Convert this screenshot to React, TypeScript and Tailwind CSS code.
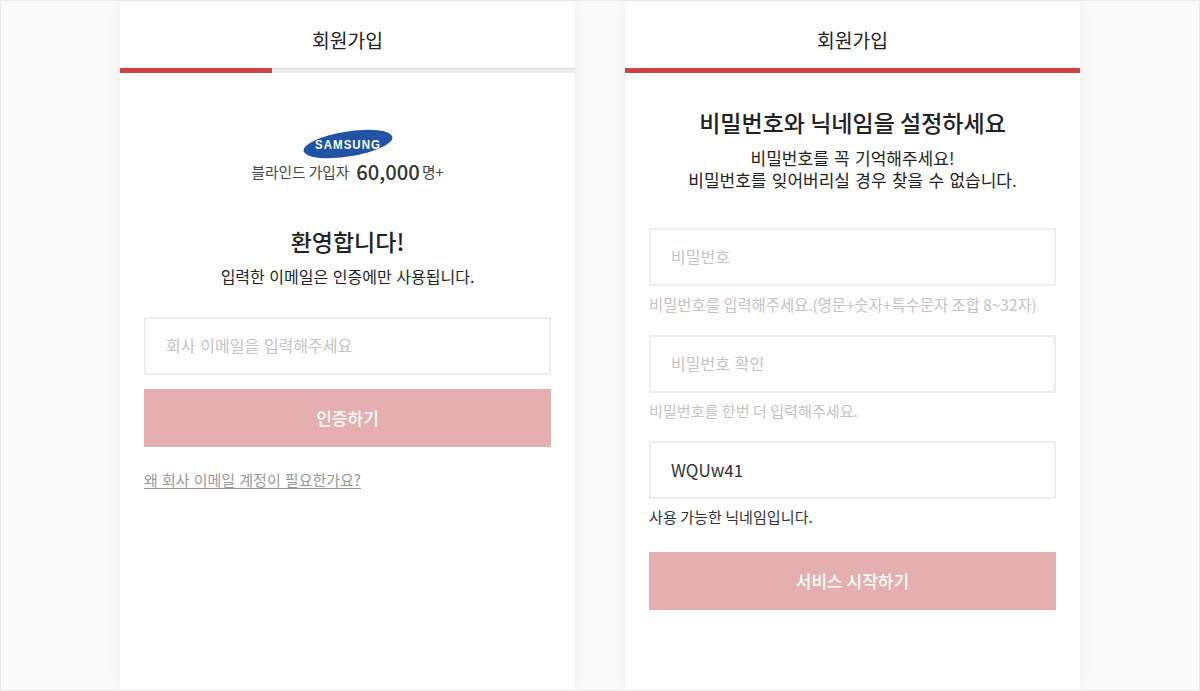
function Header({ progress }: { progress: string }) {
  return (
    <div>
      <div className="h-[67px] flex items-center justify-center pt-[12px] text-[19.3px] text-[#222]">회원가입</div>
      <div className="h-[5px] bg-[#eeeeee] border-t border-[#e0e0e0]">
        <div className={`h-[5px] -mt-px bg-[#d04343] ${progress}`} />
      </div>
    </div>
  )
}

function Field({ value, placeholder }: { value?: string; placeholder?: string }) {
  return (
    <div className="h-[58px] border-2 border-[#eeeeee] bg-white flex items-center px-[20px]">
      {value ? (
        <span className="-mt-px text-[17px] text-[#333]">{value}</span>
      ) : (
        <span className="-mt-[2px] text-[16px] [word-spacing:1.2px] text-[#c4c4c4]">{placeholder}</span>
      )}
    </div>
  )
}

function Submit({ label }: { label: string }) {
  return (
    <div className="h-[58px] bg-[#e6afaf] flex items-center justify-center text-white text-[17px] font-medium">
      {label}
    </div>
  )
}

function SamsungLogo() {
  return (
    <svg width="90" height="31" viewBox="0 0 90 31">
      <ellipse cx="45" cy="15" rx="45" ry="12.5" fill="#2353a4" transform="rotate(-9 45 15)" />
      <text x="12" y="19.8" textLength="66" lengthAdjust="spacingAndGlyphs" letterSpacing="1.2" fontFamily="Liberation Sans" fontWeight="700" fontSize="13.5" fill="#fff">
        SAMSUNG
      </text>
    </svg>
  )
}

export default function App() {
  return (
    <div className="h-[691px] w-[1200px] overflow-hidden border border-[#e8e8e8] bg-[#fafafa] flex justify-center gap-[50px] font-['Noto_Sans_CJK_KR','Noto_Sans',sans-serif]">
      {/* email step */}
      <div className="w-[455px] h-full bg-white shadow-[0_0_16px_rgba(0,0,0,0.05)]">
        <Header progress="w-[152px]" />
        <div className="px-[24px]">
          <div className="flex flex-col items-center pt-[56px]">
            <SamsungLogo />
            <div className="flex items-center h-[24px] text-[14.7px] text-[#444]">
              블라인드 가입자
              <span className="ml-[7px] mr-[2px] text-[20.2px] font-medium text-[#333]">60,000</span>
              명+
            </div>
          </div>
          <h1 className="mt-[41px] text-center text-[23px] leading-[32px] font-medium text-[#222]">환영합니다!</h1>
          <p className="mt-[8px] text-center text-[16px] [word-spacing:1px] leading-[22px] text-[#222]">입력한 이메일은 인증에만 사용됩니다.</p>
          <div className="mt-[30px]">
            <Field placeholder="회사 이메일을 입력해주세요" />
          </div>
          <div className="mt-[14px]">
            <Submit label="인증하기" />
          </div>
          <div className="mt-[20px]">
            <span className="text-[15px] [word-spacing:0.8px] leading-[22px] text-[#999] underline underline-offset-2">왜 회사 이메일 계정이 필요한가요?</span>
          </div>
        </div>
      </div>

      {/* password step */}
      <div className="w-[455px] h-full bg-white shadow-[0_0_16px_rgba(0,0,0,0.05)]">
        <Header progress="w-full" />
        <div className="px-[24px]">
          <h1 className="mt-[33px] text-center text-[23px] leading-[32px] font-medium text-[#222]">비밀번호와 닉네임을 설정하세요</h1>
          <p className="mt-[9px] text-center text-[17px] [word-spacing:1.5px] leading-[22px] text-[#222]">
            비밀번호를 꼭 기억해주세요!
            <br />
            비밀번호를 잊어버리실 경우 찾을 수 없습니다.
          </p>
          <div className="mt-[37px]">
            <Field placeholder="비밀번호" />
          </div>
          <p className="mt-[7px] h-[42px] text-[15.4px] leading-[22px] text-[#c4c4c4]">비밀번호를 입력해주세요.(영문+숫자+특수문자 조합 8~32자)</p>
          <Field placeholder="비밀번호 확인" />
          <p className="mt-[6px] h-[42px] text-[15.1px] leading-[22px] text-[#c4c4c4]">비밀번호를 한번 더 입력해주세요.</p>
          <Field value="WQUw41" />
          <p className="mt-[6px] h-[47px] text-[15.1px] leading-[22px] text-[#333]">사용 가능한 닉네임입니다.</p>
          <Submit label="서비스 시작하기" />
        </div>
      </div>
    </div>
  )
}
